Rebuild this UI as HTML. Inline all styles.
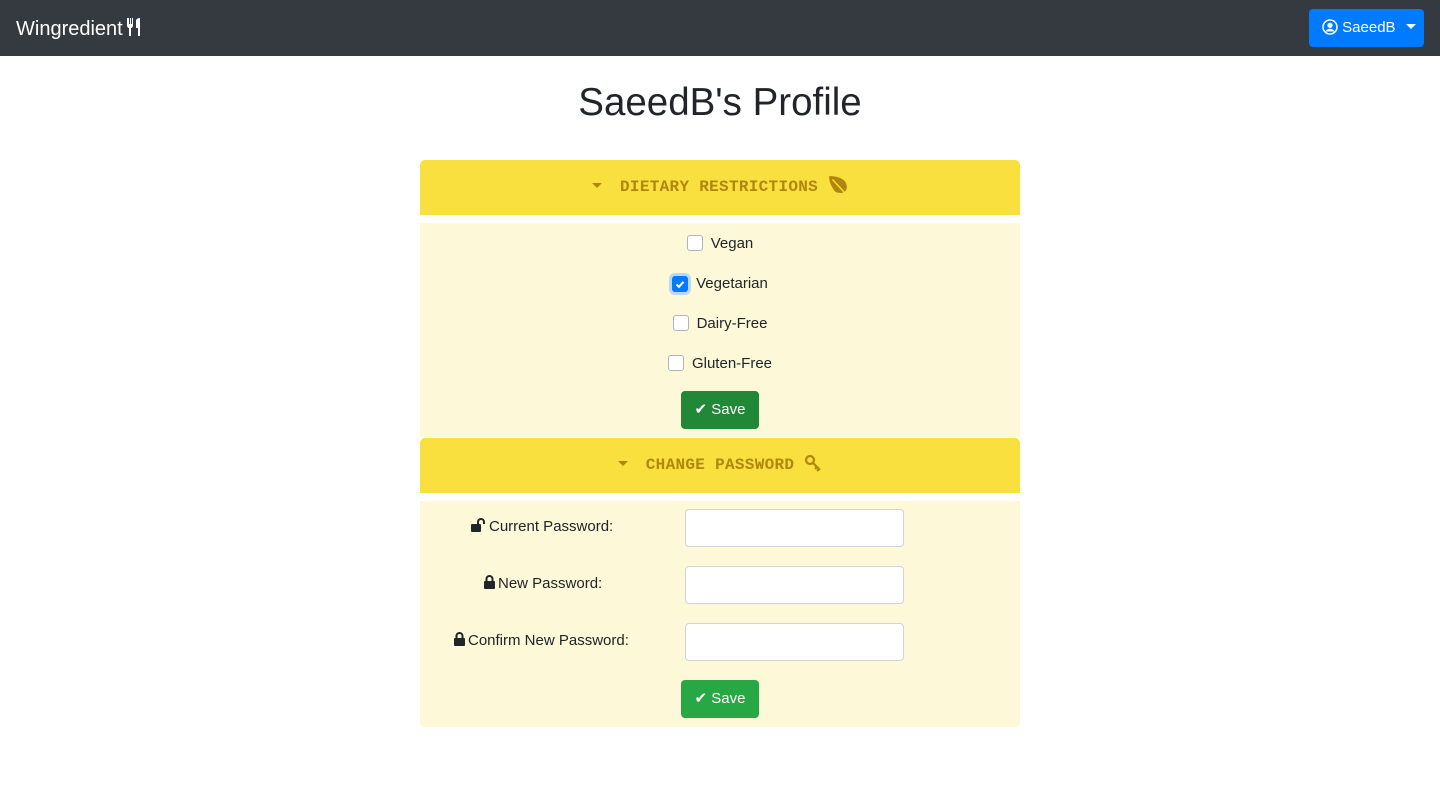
<!DOCTYPE html>
<html><head><meta charset="utf-8"><style>
*{box-sizing:border-box}
body{margin:0;width:1440px;height:810px;background:#fff;font-family:"Liberation Sans",sans-serif;color:#212529;position:relative}
.nav{position:absolute;left:0;top:0;width:1440px;height:56px;background:#343a40}
.brand{position:absolute;left:16px;top:17px;color:#fff;font-size:20px;line-height:24px}
.ub{position:absolute;left:1309px;top:9px;width:115px;height:38px;background:#007bff;border-radius:4px;color:#fff;font-size:15px;line-height:38px;padding-left:13px}
h1{position:absolute;top:79px;left:0;width:1440px;text-align:center;font-weight:400;font-size:38.5px;margin:0;line-height:48px}
.hd{position:absolute;left:420px;width:600px;height:55px;background:#f9e03f;color:#b0860c;font-family:"Liberation Mono",monospace;font-weight:bold;font-size:16px;text-align:center;line-height:55px;border-radius:5px 5px 0 0;letter-spacing:0.3px}
.bd{position:absolute;left:420px;width:600px;background:#fdf8d7}
.row{position:absolute;left:0;width:600px;text-align:center;font-size:15px}
.cb{display:inline-block;width:16px;height:16px;border:1px solid #adb5bd;border-radius:3px;background:#fff;vertical-align:-3px;margin-right:8px}
.cb.on{background:#007bff;border-color:#007bff;box-shadow:0 0 0 3px #bcd6f5}
.btn{position:absolute;left:261px;width:78px;height:38px;border-radius:4px;color:#fff;font-size:15px;line-height:38px;text-align:center}
.lbl{position:absolute;font-size:15px}
.inp{position:absolute;left:265px;width:219px;height:38px;background:#fff;border:1px solid #ced4da;border-radius:4px}
.caret{display:inline-block;border-left:5px solid transparent;border-right:5px solid transparent;border-top:5px solid currentColor;vertical-align:3px}
</style></head><body>
<div class="nav">
<div class="brand">Wingredient<svg width="20" height="20" viewBox="0 0 20 20" style="vertical-align:-2px;margin-left:2px"><path d="M2 1v7c0 2 1 3 2 3v8h2v-8c1 0 2-1 2-3V1H7v6H6V1H5v6H4V1z" fill="#fff"/><path d="M13 19V11h-2V4c0-2 2-3 4-3v18z" fill="#fff"/></svg></div>
<div class="ub"><svg width="16" height="16" viewBox="0 0 16 16" style="vertical-align:-3px"><circle cx="8" cy="8" r="7" fill="none" stroke="#fff" stroke-width="1.5"/><circle cx="8" cy="6.3" r="2.6" fill="#fff"/><path d="M3.5 12.5c1-2 2.7-2.8 4.5-2.8s3.5.8 4.5 2.8" fill="#fff"/></svg> SaeedB <span class="caret" style="margin-left:6px"></span></div>
</div>
<h1>SaeedB's Profile</h1>

<div class="hd" style="top:160px"><span class="caret" style="margin-right:18px"></span>DIETARY RESTRICTIONS <svg width="20" height="20" viewBox="0 0 18 18" style="vertical-align:-4px"><path d="M1 1c9 0 16 3 16 10 0 3-3 6-7 5-2 0-4-1-5-3C3 10 1 6 1 1z" fill="#b0860c"/><path d="M4 4l12 13" stroke="#f9e03f" stroke-width="1.3"/></svg></div>
<div class="bd" style="top:223px;height:214px">
<div class="row" style="top:12px"><span class="cb"></span>Vegan</div>
<div class="row" style="top:52px"><span class="cb on"><svg width="14" height="14" viewBox="0 0 14 14"><path d="M3.5 7.5l2.5 2.3 4.5-5" stroke="#fff" stroke-width="2" fill="none"/></svg></span>Vegetarian</div>
<div class="row" style="top:92px"><span class="cb"></span>Dairy-Free</div>
<div class="row" style="top:132px"><span class="cb"></span>Gluten-Free</div>
<div class="btn" style="top:168px;background:#218838">&#10004; Save</div>
</div>

<div class="hd" style="top:438px"><span class="caret" style="margin-right:18px"></span>CHANGE PASSWORD <svg width="18" height="18" viewBox="0 0 18 18" style="vertical-align:-3px"><circle cx="6" cy="6" r="4" fill="none" stroke="#b0860c" stroke-width="2.2"/><path d="M9 9l7 7M13 13l-2 2M15 15l-2 2" stroke="#b0860c" stroke-width="2.2"/></svg></div>
<div class="bd" style="top:501px;height:226px;border-radius:0 0 5px 5px">
<div class="lbl" style="left:51px;top:17px"><svg width="16" height="14" viewBox="0 0 16 14" style="vertical-align:-1px;margin-right:2px"><rect x="0" y="6" width="10" height="8" rx="1" fill="#212529"/><path d="M7 6V4a3 3 0 016 0v2" fill="none" stroke="#212529" stroke-width="2"/></svg>Current Password:</div>
<div class="inp" style="top:8px"></div>
<div class="lbl" style="left:64px;top:74px"><svg width="12" height="14" viewBox="0 0 12 14" style="vertical-align:-1px;margin-right:2px"><rect x="0" y="6" width="11" height="8" rx="1" fill="#212529"/><path d="M2.5 6V4a3 3 0 016 0v2" fill="none" stroke="#212529" stroke-width="2"/></svg>New Password:</div>
<div class="inp" style="top:65px"></div>
<div class="lbl" style="left:34px;top:131px"><svg width="12" height="14" viewBox="0 0 12 14" style="vertical-align:-1px;margin-right:2px"><rect x="0" y="6" width="11" height="8" rx="1" fill="#212529"/><path d="M2.5 6V4a3 3 0 016 0v2" fill="none" stroke="#212529" stroke-width="2"/></svg>Confirm New Password:</div>
<div class="inp" style="top:122px"></div>
<div class="btn" style="top:179px;background:#28a745">&#10004; Save</div>
</div>
</body></html>
